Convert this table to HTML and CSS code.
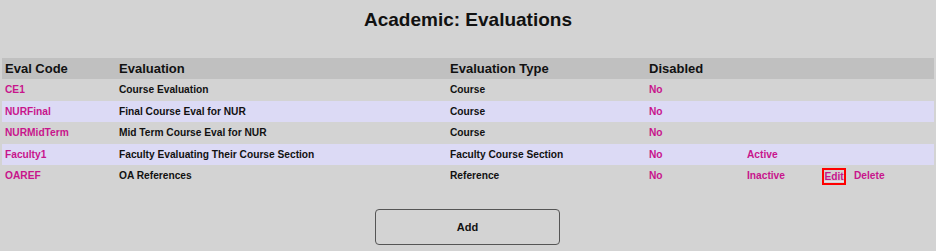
FILE: index.html
```html
<!DOCTYPE html>
<html>
<head>
<meta charset="utf-8">
<link rel="stylesheet" href="styles.css">
</head>
<body>
<div class="page">
  <h1 class="title">Academic: Evaluations</h1>
  <table class="grid">
    <colgroup>
      <col class="c-code"><col class="c-eval"><col class="c-type"><col class="c-dis"><col class="c-act"><col class="c-edit"><col class="c-del">
    </colgroup>
    <thead>
      <tr><th>Eval Code</th><th>Evaluation</th><th>Evaluation Type</th><th>Disabled</th><th></th><th></th><th></th></tr>
    </thead>
    <tbody>
      <tr><td class="link">CE1</td><td>Course Evaluation</td><td>Course</td><td class="link">No</td><td></td><td></td><td></td></tr>
      <tr class="alt"><td class="link">NURFinal</td><td>Final Course Eval for NUR</td><td>Course</td><td class="link">No</td><td></td><td></td><td></td></tr>
      <tr><td class="link">NURMidTerm</td><td>Mid Term Course Eval for NUR</td><td>Course</td><td class="link">No</td><td></td><td></td><td></td></tr>
      <tr class="alt"><td class="link">Faculty1</td><td>Faculty Evaluating Their Course Section</td><td>Faculty Course Section</td><td class="link">No</td><td class="link">Active</td><td></td><td></td></tr>
      <tr><td class="link">OAREF</td><td>OA References</td><td>Reference</td><td class="link">No</td><td class="link">Inactive</td><td class="link"><span class="focus">Edit</span></td><td class="link">Delete</td></tr>
    </tbody>
  </table>
  <div class="actions"><button class="add">Add</button></div>
</div>
</body>
</html>
```
FILE: styles.css
```css
html, body { margin: 0; padding: 0; background: #d3d3d3; }
body { font-family: "Liberation Sans", Arial, sans-serif; color: #111; }
.page { padding: 0 2px; }
.title { margin: 0; padding-top: 9px; height: 58px; box-sizing: border-box; text-align: center; font-size: 19px; font-weight: bold; line-height: 22px; color: #111; }
.grid { width: 932px; border-collapse: collapse; table-layout: fixed; }
.c-code { width: 114px; }
.c-eval { width: 331px; }
.c-type { width: 199px; }
.c-dis { width: 98px; }
.c-act { width: 74px; }
.c-edit { width: 33px; }
.c-del { width: 83px; }
.grid th { background: #c0c0c0; text-align: left; font-size: 13px; font-weight: bold; height: 21px; padding: 0 3px; line-height: 21px; }
.grid td { font-size: 10.2px; font-weight: bold; height: 21.5px; padding: 0 3px; line-height: 21px; white-space: nowrap; }
.grid tr.alt td { background: #dcdaf5; }
.link { color: #c8158c; }
.focus { display: inline-block; outline: 2px solid #ff0000; outline-offset: 0; padding: 0 0.5px; line-height: 13px; height: 13px; text-decoration: underline; text-decoration-color: #e8e0f0; text-decoration-thickness: 1px; margin-left: 3px; vertical-align: -1px; }
.actions { display: flex; justify-content: center; padding-top: 22px; }
.add { width: 185px; height: 36px; border: 1px solid #555; border-radius: 4px; background: #d3d3d3; font-family: "Liberation Sans", Arial, sans-serif; font-weight: bold; font-size: 11px; color: #111; margin-left: -1px; }
```
